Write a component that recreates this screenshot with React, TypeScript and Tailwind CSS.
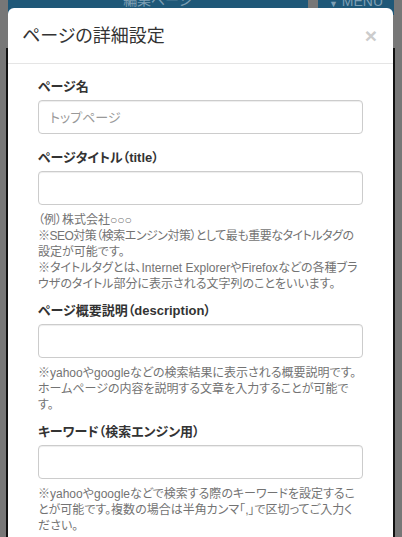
import React from "react";

const jp = "font-['Liberation_Sans','Noto_Sans_CJK_JP',sans-serif] [font-feature-settings:'palt']";

function Label({ children }: { children: React.ReactNode }) {
  return (
    <div className={`${jp} text-[13px] font-bold leading-[18px] text-[#333] mb-[4px]`}>
      {children}
    </div>
  );
}

function Input({ placeholder }: { placeholder?: string }) {
  return (
    <input
      className={`${jp} block w-full h-[34px] rounded-[4px] border border-[#cccccc] bg-white px-[11px] text-[13px] text-[#555] placeholder:text-[#999] shadow-[inset_0_1px_1px_rgba(0,0,0,0.075)] outline-none`}
      placeholder={placeholder}
    />
  );
}

function Help({ children }: { children: React.ReactNode }) {
  return (
    <div className={`${jp} text-[12px] leading-[16px] text-[#737373] mt-[7px]`}>
      {children}
    </div>
  );
}

export default function App() {
  return (
    <div className="relative w-[402px] h-[537px] overflow-hidden bg-[#777777]">
      {/* page behind the overlay */}
      <div className="absolute inset-0">
        <div className="absolute left-[8px] top-0 w-[300px] h-[15px] bg-[#1f5878] flex justify-center">
          <span className="font-['Noto_Sans_CJK_JP',sans-serif] text-[14px] leading-none text-[#7e9fb4] -mt-[8px]">編集ページ</span>
        </div>
        <div className="absolute left-[318px] top-0 w-[76px] h-[15px] bg-[#1f5878] flex items-start justify-center gap-[4px]">
          <span className="text-[9px] leading-none text-[#7e9fb4] -mt-[1px]">▼</span>
          <span className="font-['Liberation_Sans',sans-serif] text-[14px] leading-none text-[#7e9fb4] -mt-[6px]">MENU</span>
        </div>
        <div className="absolute left-[6px] top-[48px] bottom-0 w-[2px] bg-[#111]" />
        <div className="absolute left-[393px] top-[48px] bottom-0 w-[2px] bg-[#111]" />
      </div>

      <div className="relative ml-[8px] mt-[8px] w-[385px] h-[600px] bg-white rounded-t-[6px]">
        <div className="h-[56px] pl-[14px] pr-[16px] flex items-center justify-between border-b border-[#e5e5e5]">
          <h4 className={`${jp} text-[18px] font-normal text-[#333] leading-none pt-[1px]`}>ページの詳細設定</h4>
          <span className="font-['Liberation_Sans',sans-serif] text-[21px] font-bold leading-none text-[#cccccc] -mt-[1px]">×</span>
        </div>
        <div className="px-[30px] pt-[14px]">
          <Label>ページ名</Label>
          <Input placeholder="トップページ" />

          <div className="mt-[15px]">
            <Label>ページタイトル（title）</Label>
            <Input />
            <Help>
              （例）株式会社○○○
              <br />
              <span className="tracking-[-0.5px]">※SEO対策（検索エンジン対策）として最も重要なタイトルタグの</span>設定が可能です。
              <br />
              ※タイトルタグとは、Internet ExplorerやFirefoxなどの各種ブラウザのタイトル部分に表示される文字列のことをいいます。
            </Help>
          </div>

          <div className="mt-[10px]">
            <Label>ページ概要説明（description）</Label>
            <Input />
            <Help>
              ※yahooやgoogleなどの検索結果に表示される概要説明です。ホームページの内容を説明する文章を入力することが可能です。
            </Help>
          </div>

          <div className="mt-[10px]">
            <Label>キーワード（検索エンジン用）</Label>
            <Input />
            <Help>
              ※yahooやgoogleなどで検索する際のキーワードを設定することが可能です。複数の場合は半角カンマ「,」で区切ってご入力ください。
            </Help>
          </div>
        </div>
      </div>
    </div>
  );
}
